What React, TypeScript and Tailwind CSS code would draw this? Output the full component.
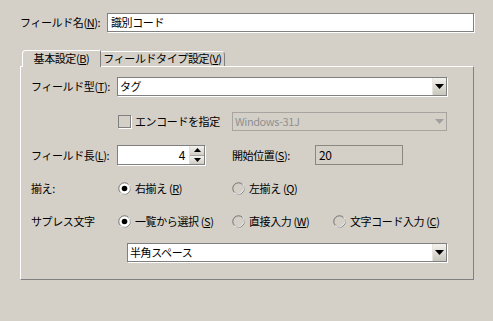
import React from "react";

const font = {
  fontFamily: '"Noto Sans CJK JP", "Noto Sans", sans-serif',
};

function Key({ k }: { k: string }) {
  return <span className="underline underline-offset-1">{k}</span>;
}

function Arrow({ disabled }: { disabled?: boolean }) {
  return (
    <svg width="9" height="5" viewBox="0 0 9 5">
      <polygon points="0,0 9,0 4.5,5" fill={disabled ? "#a0a0a0" : "#000"} />
    </svg>
  );
}

function Select({ text, width, disabled }: { text: string; width: string; disabled?: boolean }) {
  return (
    <div
      className={`${width} h-[19px] flex items-stretch border ${
        disabled ? "border-[#a8a5a0] bg-[#d4d0c8] text-[#909090]" : "border-[#808080] bg-white shadow-[1px_1px_0_#fff]"
      }`}
    >
      <div className="flex-1 flex items-center pl-[2px] whitespace-nowrap">{text}</div>
      <div
        className={`w-[14px] flex items-center justify-center ${
          disabled ? "" : "bg-gradient-to-b from-[#f4f3ee] to-[#c9c6bd] border-l border-[#e8e6df]"
        }`}
      >
        <Arrow disabled={disabled} />
      </div>
    </div>
  );
}

function Radio({ checked }: { checked?: boolean }) {
  return (
    <svg width="13" height="13" viewBox="0 0 13 13" className="shrink-0">
      <circle cx="6.5" cy="6.5" r="5.7" fill={checked ? "#fff" : "#d4d0c8"} stroke="#707070" strokeWidth="1" />
      <path d="M2.2 10.8 A6.2 6.2 0 0 0 10.8 2.2" fill="none" stroke="#fff" strokeWidth="0.8" />
      {checked && <circle cx="6.5" cy="6.5" r="2.8" fill="#000" />}
    </svg>
  );
}

function RadioItem({ checked, label, k, w }: { checked?: boolean; label: string; k: string; w: string }) {
  return (
    <div className={`${w} flex items-center gap-[4px] whitespace-nowrap`}>
      <Radio checked={checked} />
      <span>
        {label}&nbsp;(<Key k={k} />)
      </span>
    </div>
  );
}

export default function App() {
  return (
    <div
      className="w-[493px] h-[321px] bg-[#d4d0c8] text-black text-[11px] leading-none tracking-[-0.4px] overflow-hidden"
      style={font}
    >
      <div className="flex items-center pt-[13px] pl-[20px]">
        <div className="w-[87px] whitespace-nowrap">
          フィールド名(<Key k="N" />):
        </div>
        <div className="w-[367px] h-[19px] border border-[#808080] bg-white shadow-[1px_1px_0_#fff] flex items-center pl-[3px]">
          識別コード
        </div>
      </div>

      <div className="ml-[20px] mt-[18px] w-[454px]">
        <div className="flex items-end h-[16px] pl-[2px] whitespace-nowrap">
          <div className="relative z-10 h-[17px] w-[79px] -mb-px bg-[#d4d0c8] border-l border-t border-white border-r-[1px] border-r-[#808080] rounded-tl-[4px] flex items-center justify-center pb-[1px]">
            基本設定(<Key k="B" />)
          </div>
          <div className="h-[15px] w-[124px] border-t border-white border-r border-r-[#808080] rounded-tr-[4px] flex items-center justify-center pb-[1px]">
            フィールドタイプ設定(<Key k="V" />)
          </div>
        </div>

        <div className="h-[214px] border-l border-t border-white border-r border-b border-r-[#808080] border-b-[#808080] pl-[10px] pt-[10px] whitespace-nowrap">
          <div className="flex items-center h-[19px]">
            <div className="w-[86px]">
              フィールド型(<Key k="T" />):
            </div>
            <Select text="タグ" width="w-[330px]" />
          </div>

          <div className="flex items-center h-[19px] mt-[16px]">
            <div className="w-[86px]" />
            <div className="w-[115px] flex items-center gap-[4px] pl-px">
              <div className="w-[13px] h-[13px] border border-[#808080] bg-[#d4d0c8] shadow-[1px_1px_0_#fff]" />
              <span>エンコードを指定</span>
            </div>
            <Select text="Windows-31J" width="w-[215px]" disabled />
          </div>

          <div className="flex items-center h-[20px] mt-[14px]">
            <div className="w-[86px]">
              フィールド長(<Key k="L" />):
            </div>
            <div className="w-[115px]">
              <div className="w-[88px] h-[20px] border border-[#808080] bg-white shadow-[1px_1px_0_#fff] flex">
                <div className="flex-1 flex items-center justify-end pr-[4px] text-[12px]">4</div>
                <div className="w-[15px] flex flex-col border-l border-[#e0ded8]">
                  <div className="flex-1 bg-gradient-to-b from-[#f4f3ee] to-[#d0cdc5] border-b border-[#a8a5a0] flex items-center justify-center">
                    <svg width="7" height="4" viewBox="0 0 7 4">
                      <polygon points="3.5,0 7,4 0,4" fill="#000" />
                    </svg>
                  </div>
                  <div className="flex-1 bg-gradient-to-b from-[#f4f3ee] to-[#d0cdc5] flex items-center justify-center">
                    <svg width="7" height="4" viewBox="0 0 7 4">
                      <polygon points="0,0 7,0 3.5,4" fill="#000" />
                    </svg>
                  </div>
                </div>
              </div>
            </div>
            <div className="w-[83px]">
              開始位置(<Key k="S" />):
            </div>
            <div className="w-[88px] h-[20px] border border-[#8a8780] bg-[#d4d0c8] flex items-center pl-[3px] text-[12px]">
              20
            </div>
          </div>

          <div className="flex items-center h-[20px] mt-[13px]">
            <div className="w-[87px]">揃え:</div>
            <RadioItem checked label="右揃え" k="R" w="w-[114px]" />
            <RadioItem label="左揃え" k="Q" w="w-[100px]" />
          </div>

          <div className="flex items-center h-[20px] mt-[13px]">
            <div className="w-[87px]">サプレス文字</div>
            <RadioItem checked label="一覧から選択" k="S" w="w-[114px]" />
            <RadioItem label="直接入力" k="W" w="w-[101px]" />
            <RadioItem label="文字コード入力" k="C" w="w-[120px]" />
          </div>

          <div className="flex items-center h-[19px] mt-[12px]">
            <div className="w-[96px]" />
            <Select text="半角スペース" width="w-[320px]" />
          </div>
        </div>
      </div>
    </div>
  );
}
